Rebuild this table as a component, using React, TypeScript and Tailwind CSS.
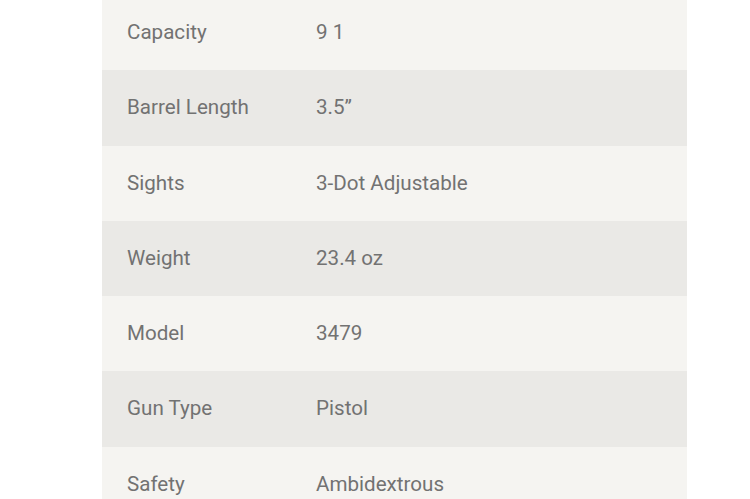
import React from "react";

const rows: [string, string][] = [
  ["Capacity", "9 1"],
  ["Barrel Length", "3.5\u201d"],
  ["Sights", "3-Dot Adjustable"],
  ["Weight", "23.4 oz"],
  ["Model", "3479"],
  ["Gun Type", "Pistol"],
  ["Safety", "Ambidextrous"],
];

export default function App() {
  return (
    <div className="w-[750px] h-[499px] overflow-hidden bg-white" style={{ fontFamily: "Roboto, 'Noto Sans', sans-serif" }}>
      <div className="ml-[102px] w-[585px] mt-[-5px] flex flex-col">
        {rows.map(([k, v], i) => (
          <div
            key={k}
            className={`flex items-center h-[75.25px] text-[20.6px] text-[#727272] ${i % 2 === 1 ? "bg-[#eae9e6]" : "bg-[#f5f4f1]"}`}
          >
            <div className="w-[214px] pl-[25px]">{k}</div>
            <div>{v}</div>
          </div>
        ))}
      </div>
    </div>
  );
}
